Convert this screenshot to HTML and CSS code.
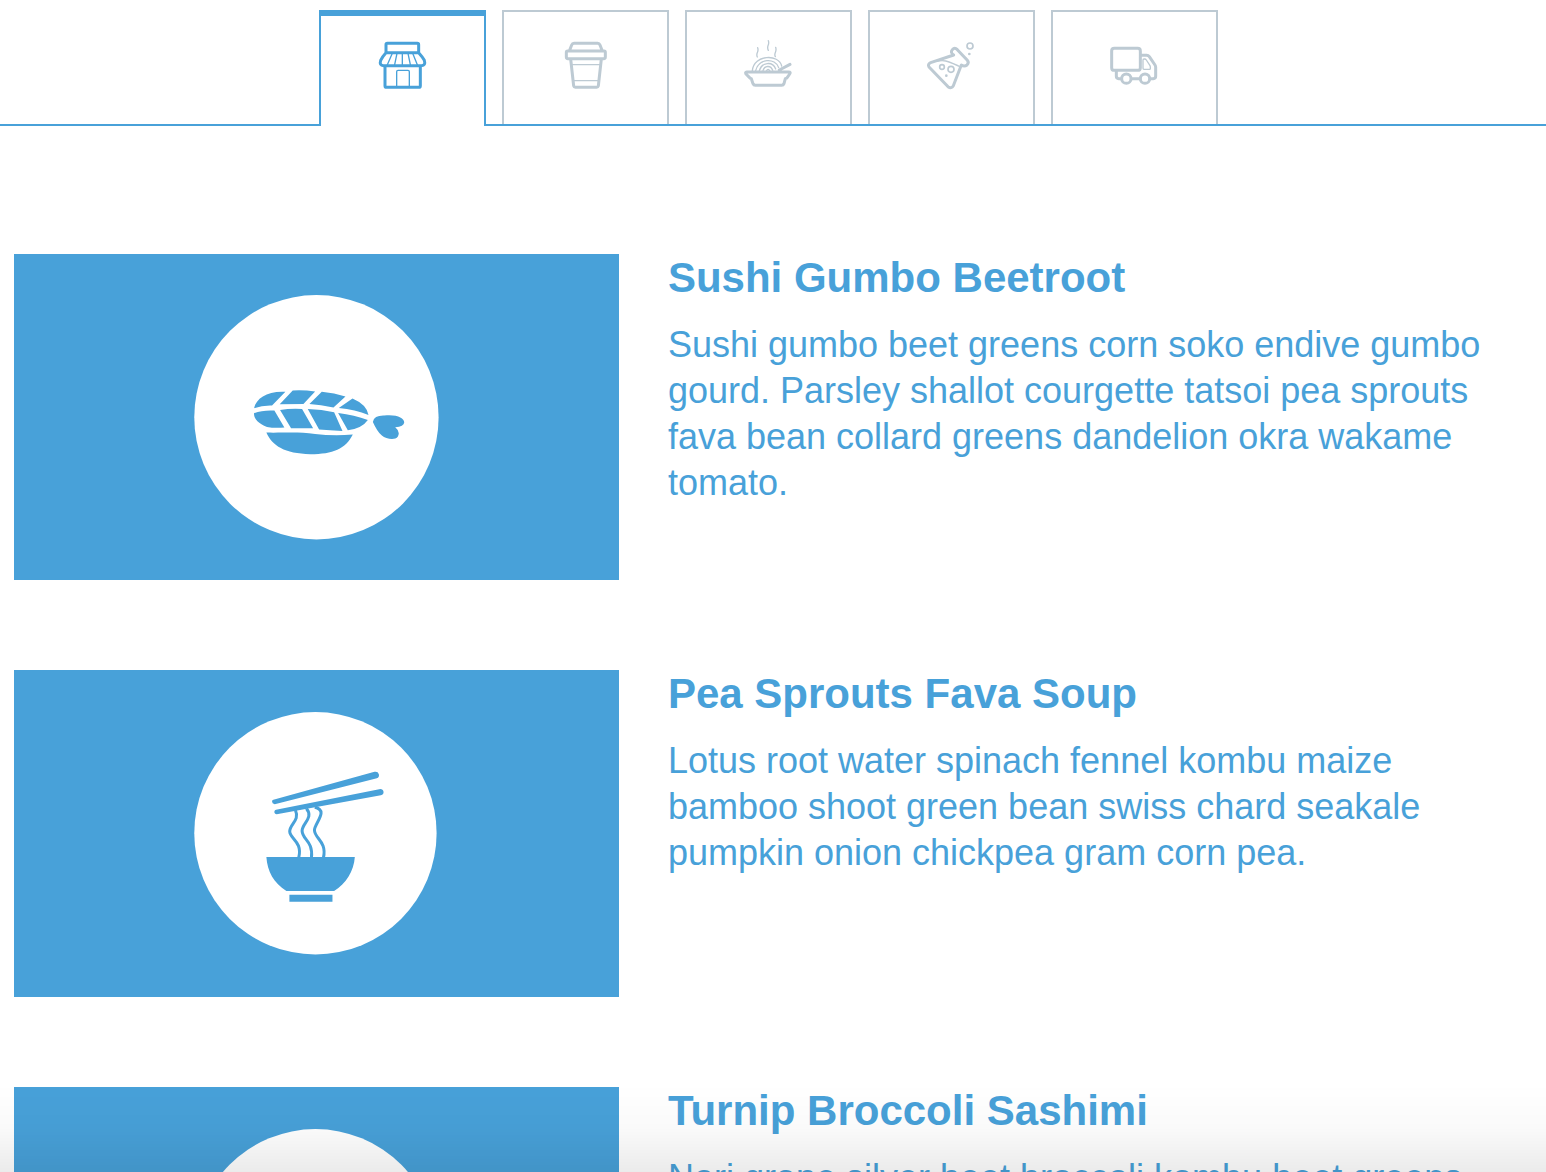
FILE: index.html
```
<!DOCTYPE html>
<html lang="en">
<head>
<meta charset="utf-8">
<meta name="viewport" content="width=device-width, initial-scale=1">
<title>Menu</title>
<link rel="stylesheet" href="styles.css">
</head>
<body>
<nav class="tabs" role="tablist" aria-label="Sections">
  <button class="tab tab-current" type="button" role="tab" aria-selected="true" aria-label="Shop">
    <svg class="tab-icon" viewBox="27 33 144 144">
      <path d="M51 67V44Q51 40 55 40H145Q149 40 149 44V67M51 68H149M51 68Q40 80 35 91Q30 107 44 107H157Q171 107 166 91Q160 80 149 68M48 108V167Q48 172 53 172H149Q154 172 154 167V108"/>
      <path class="thin" d="M70 70L55 104M84 70L77 104M100 70V104M117 70L124 104M131 70L145 104M83 170V125Q83 121 87 121H117Q121 121 121 125V170"/>
    </svg>
  </button>
  <button class="tab" type="button" role="tab" aria-selected="false" aria-label="Drinks">
    <svg class="tab-icon" viewBox="33 33 144 144">
      <path d="M58 63L65 45Q67 40 72 40H143Q148 40 150 45L157 63M53 63H162Q166 63 166 67V81Q166 86 161 86H54Q49 86 49 81V67Q49 63 53 63ZM62 87L71 168Q72 172 76 172H140Q144 172 145 168L154 87"/>
      <path class="thin" d="M66 104H150M72 152H144"/>
    </svg>
  </button>
  <button class="tab" type="button" role="tab" aria-selected="false" aria-label="Noodles">
    <svg class="tab-icon" viewBox="27 33 144 144">
      <path d="M35 126H161Q168 126 164 132L157 142Q155 145 151 146L147 161Q145 166 140 166H61Q56 166 54 161L49 146Q45 145 43 142L33 132Q30 126 35 126ZM133 120L165 103"/>
      <path class="thin" d="M52 122C57 73 132 71 140 108M62 122C70 85 121 82 131 113M73 122C80 96 113 93 122 117M84 122C88 107 107 104 113 121M94 123Q99 114 105 123M67 81C61 69 73 67 68 53M100 61C93 48 105 45 100 32M121 80C115 69 127 66 122 52"/>
    </svg>
  </button>
  <button class="tab" type="button" role="tab" aria-selected="false" aria-label="Lab">
    <svg class="tab-icon" viewBox="36 33 144 144">
      <path d="M116 75Q105 68 112 59Q119 51 127 59L157 91Q163 98 156 105Q148 111 139 105L115 167Q109 177 100 171L42 111Q37 103 47 98Z"/>
      <path class="thin" d="M65 94C93 87 105 98 133 109"/>
      <circle class="medium" cx="165" cy="48" r="9"/><circle class="medium" cx="81" cy="111" r="7"/><circle class="medium" cx="108" cy="118" r="9"/>
      <circle class="dot" cx="163" cy="72" r="4"/><circle class="dot" cx="94" cy="137" r="4"/>
    </svg>
  </button>
  <button class="tab" type="button" role="tab" aria-selected="false" aria-label="Delivery">
    <svg class="tab-icon" viewBox="27 33 144 144">
      <path d="M40 55H110Q118 55 118 63V113Q118 121 110 121H40Q32 121 32 113V63Q32 55 40 55ZM119 76H137Q142 76 145 80L162 105Q164 108 164 112V139Q164 146 157 146H148M117 146H92M61 146H53Q46 146 46 139V123"/>
      <circle cx="76" cy="146" r="14"/><circle cx="132" cy="146" r="14"/>
      <path class="thin" d="M126 90Q126 87 129 87H131Q134 87 136 90L147 107Q148 109 148 112V116Q148 118 145 118H129Q126 118 126 115Z"/>
    </svg>
  </button>
</nav>

<main class="dishes">
  <article class="dish">
    <svg class="dish-picture" viewBox="0 0 604 326" role="img" aria-label="Sushi">
      <circle class="plate" cx="302" cy="163" r="122"/>
      <svg x="226" y="116" width="180" height="100" viewBox="0 0 540 300">
        <path d="M41 114C48 84 81 62 135 65L95 106Q66 105 41 114ZM118 102L157 61Q190 59 224 64L189 101ZM207 101L244 65Q282 69 315 79L279 112Q240 103 207 101ZM295 113L336 85Q378 103 384 134Q344 118 295 113ZM41 129Q67 119 102 121L132 172Q100 174 80 170C54 160 40 146 41 129ZM119 119Q150 114 185 116L218 174H152ZM202 116Q244 117 281 126L306 182Q267 181 236 178ZM293 128Q342 134 382 149Q365 174 322 180ZM78 187C135 188 174 184 224 191Q278 198 337 193C315 236 278 252 210 252C132 250 96 227 78 187ZM397 155Q401 135 431 136C469 132 491 143 491 157Q490 169 464 171Q480 184 472 199C463 212 436 206 424 196Q410 184 397 155Z"/>
      </svg>
    </svg>
    <div class="dish-text">
      <h2>Sushi Gumbo Beetroot</h2>
      <p>Sushi gumbo beet greens corn soko endive gumbo gourd. Parsley shallot courgette tatsoi pea sprouts fava bean collard greens dandelion okra wakame tomato.</p>
    </div>
  </article>

  <article class="dish">
    <svg class="dish-picture" viewBox="0 0 604 326" role="img" aria-label="Noodle soup">
      <circle class="plate" cx="301" cy="163" r="121"/>
      <svg x="236" y="90" width="150" height="150" viewBox="0 0 450 450">
        <path d="M69 119L372 35Q382 33 385 42Q387 51 379 54L73 132Q65 131 65 124Q65 120 69 119ZM77 149L386 87Q397 85 399 95Q400 103 391 105L79 162Q71 161 72 154Q73 150 77 149ZM48 290H313C310 332 287 370 251 392H108C70 368 51 333 48 290ZM117 403H246V424H117Z"/>
        <path class="noodle" d="M135 150C149 181 118 191 118 214C119 236 157 244 145 292M168 145C191 173 155 189 155 212C156 239 189 242 183 292M193 141C236 150 192 190 192 210C193 235 230 244 219 292"/>
      </svg>
    </svg>
    <div class="dish-text">
      <h2>Pea Sprouts Fava Soup</h2>
      <p>Lotus root water spinach fennel kombu maize bamboo shoot green bean swiss chard seakale pumpkin onion chickpea gram corn pea.</p>
    </div>
  </article>

  <article class="dish">
    <svg class="dish-picture" viewBox="0 0 604 326" role="img" aria-label="Sashimi">
      <circle class="plate" cx="301" cy="163" r="121"/>
    </svg>
    <div class="dish-text">
      <h2>Turnip Broccoli Sashimi</h2>
      <p>Nori grape silver beet broccoli kombu beet greens</p>
    </div>
  </article>
</main>
</body>
</html>
```
FILE: styles.css
```
:root {
  --blue: #48a1d9;
  --grey: #bdcad3;
}

* {
  box-sizing: border-box;
}

body {
  margin: 0;
  height: 100vh;
  overflow: hidden;
  background: #fff;
  color: var(--blue);
  font-family: "Liberation Sans", Arial, sans-serif;
}

/* Shade along the bottom edge of the window */
body::after {
  content: "";
  position: fixed;
  inset: auto 0 0;
  height: 88px;
  background: linear-gradient(to bottom, rgba(0, 0, 0, 0), rgba(0, 0, 0, 0.02) 50%, rgba(0, 0, 0, 0.08));
  pointer-events: none;
}

.tabs {
  display: flex;
  justify-content: center;
  gap: 16px;
  padding: 10px 10px 0 0;
  border-bottom: 2px solid var(--blue);
}

.tab {
  display: flex;
  align-items: center;
  justify-content: center;
  width: 167px;
  height: 114px;
  padding: 0 0 6px;
  border: 2px solid var(--grey);
  border-bottom: 0;
  background: #fff;
  color: var(--grey);
  cursor: pointer;
}

.tab-current {
  height: 116px;
  margin-bottom: -2px;
  padding-bottom: 12px;
  border-color: var(--blue);
  border-top-width: 6px;
  color: var(--blue);
}

.tab-icon {
  width: 48px;
  height: 48px;
  overflow: visible;
  fill: none;
  stroke: currentColor;
  stroke-width: 9;
  stroke-linecap: round;
  stroke-linejoin: round;
}

.tab-icon .thin {
  stroke-width: 4;
}

.tab-icon .medium {
  stroke-width: 5;
}

.tab-icon .dot {
  fill: currentColor;
  stroke: none;
}

.dishes {
  display: grid;
  gap: 90px;
  padding: 128px 14px;
}

.dish {
  display: grid;
  grid-template-columns: 7fr 10fr;
  gap: 49px;
  align-items: start;
}

.dish-picture {
  display: block;
  width: 100%;
  background: var(--blue);
  fill: var(--blue);
}

.plate {
  fill: #fff;
}

.noodle {
  fill: none;
  stroke: var(--blue);
  stroke-width: 9;
}

.dish-text {
  padding-right: 36px;
}

.dish-text h2 {
  margin: 0 0 20px;
  font-size: 42px;
  line-height: 48px;
}

.dish-text p {
  margin: 0;
  font-size: 36px;
  line-height: 46px;
}
```
